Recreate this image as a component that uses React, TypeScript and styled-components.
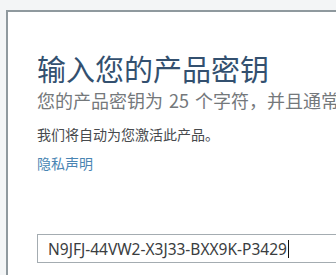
import React from "react";
import styled, { createGlobalStyle } from "styled-components";

const GlobalStyle = createGlobalStyle`
  html, body {
    margin: 0;
    padding: 0;
    width: 336px;
    height: 275px;
    overflow: hidden;
    background: #f3f5f6;
  }
`;

const cjk = `"Noto Sans CJK SC", "Noto Sans", sans-serif`;

const Window = styled.div`
  margin: 10px 0 0 6px;
  width: 330px;
  height: 265px;
  overflow: hidden;
  background: #ffffff;
  border-top: 2px solid #8f999e;
  border-left: 2px solid #8f999e;
  box-sizing: border-box;
`;

const Content = styled.div`
  display: flex;
  flex-direction: column;
  padding: 38px 0 0 29px;
`;

const Title = styled.h1`
  margin: 0;
  font-family: ${cjk};
  font-size: 29px;
  line-height: 36px;
  font-weight: 400;
  color: #33506f;
`;

const Subtitle = styled.p`
  margin: 3px 0 0;
  font-family: ${cjk};
  font-size: 18px;
  line-height: 22px;
  word-spacing: 2px;
  color: #74787b;
  white-space: nowrap;
`;

const Note = styled.p`
  margin: 14px 0 0;
  font-family: ${cjk};
  font-size: 14px;
  line-height: 19px;
  color: #474a4d;
  white-space: nowrap;
`;

const Link = styled.a`
  margin-top: 10px;
  font-family: ${cjk};
  font-size: 14px;
  line-height: 19px;
  color: #4a85b3;
  text-decoration: none;
`;

const KeyField = styled.div`
  margin-top: 61px;
  width: 340px;
  height: 29px;
  box-sizing: border-box;
  border: 1px solid #a4acb1;
  display: flex;
  align-items: center;
  padding-left: 10px;
  font-family: "Noto Sans", "Open Sans", sans-serif;
  font-size: 15.5px;
  color: #3a3d40;
`;

const Caret = styled.span`
  display: inline-block;
  width: 1px;
  height: 18px;
  margin-left: 1px;
  background: #111;
`;

export default function App() {
  return (
    <>
      <GlobalStyle />
      <Window>
        <Content>
          <Title>输入您的产品密钥</Title>
          <Subtitle>您的产品密钥为 25 个字符，并且通常包含在产品包装中。</Subtitle>
          <Note>我们将自动为您激活此产品。</Note>
          <Link href="#">隐私声明</Link>
          <KeyField>
            N9JFJ-44VW2-X3J33-BXX9K-P3429
            <Caret />
          </KeyField>
        </Content>
      </Window>
    </>
  );
}
